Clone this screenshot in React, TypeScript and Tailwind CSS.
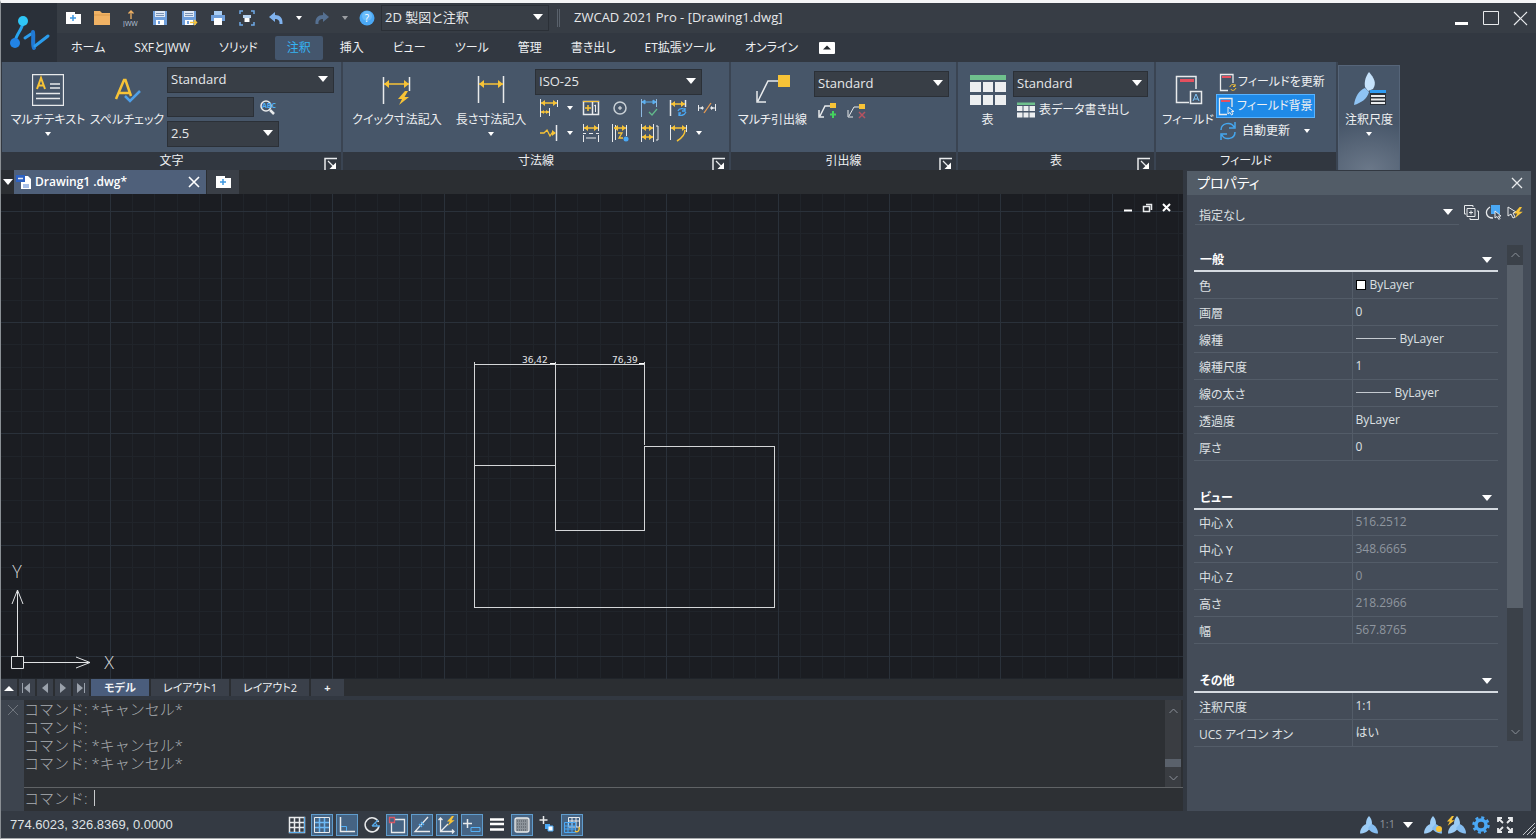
import React, { ReactNode } from 'react'
import { clsx } from 'clsx'

type Kids = { children: ReactNode }

const Caret = ({ className }: { className?: string }) => (
  <svg viewBox="0 0 10 6" className={clsx('h-[6px] w-[10px] fill-white', className)}>
    <path d="M0 0H10L5 6Z" />
  </svg>
)

const SmallCaret = () => (
  <svg viewBox="0 0 6 4" className="h-1 w-1.5 fill-white">
    <path d="M0 0H6L3 4Z" />
  </svg>
)

function Icon({
  size = 20,
  label,
  children,
}: {
  size?: number
  label?: string
  children: ReactNode
}) {
  return (
    <svg
      width={size}
      height={size}
      viewBox={`0 0 ${size} ${size}`}
      fill="none"
      stroke="#e8eaec"
      className="shrink-0"
      aria-label={label}>
      {children}
    </svg>
  )
}

const Scale = ({ mark }: { mark?: ReactNode }) => (
  <Icon size={20}>
    <g fill="#9cccf5" stroke="none">
      <path d="M10 1C13 4 13.500 8 12.500 12H7.500C6.500 8 7 4 10 1Z" />
      <path d="M7.500 9L11 13C9 17 5 18.500 1 18.500C1 14 4 10 7.500 9Z" />
      <path d="M12.500 9C16 10 19 14 19 18.500C15 18.500 11 17 9 13Z" fill="#85bdf0" />
    </g>
    {mark}
  </Icon>
)

const Bolt = ({ x = 0, y = 0, s = 1 }: { x?: number; y?: number; s?: number }) => (
  <path
    transform={`translate(${x} ${y}) scale(${s})`}
    d="M7 0L0 8H4L1 14L11 6H6.500L10 0Z"
    fill="#f7c337"
    stroke="none"
  />
)

// horizontal dimension line with two solid arrow heads
const Arrow = ({ x1, x2, y, h = 3 }: { x1: number; x2: number; y: number; h?: number }) => (
  <g fill="#f7c337" stroke="#f7c337">
    <path d={`M${x1} ${y}H${x2}`} strokeWidth="1.500" />
    <path
      stroke="none"
      d={`M${x1} ${y}l${h + 1} ${-h}v${2 * h}zM${x2} ${y}l${-h - 1} ${-h}v${2 * h}z`}
    />
  </g>
)

function Combo({
  label,
  value,
  className,
}: {
  label: string
  value: string
  className?: string
}) {
  return (
    <div className={clsx('relative', className)}>
      <select
        aria-label={label}
        className="block h-[26px] w-full appearance-none border border-[#2b3037] bg-[#383e46] pl-[3px] text-[13px] text-[#e6e8ea] outline-none">
        <option>{value}</option>
      </select>
      <Caret className="pointer-events-none absolute top-[9px] right-1.5" />
    </div>
  )
}

function BigButton({
  label,
  caret,
  className,
  children,
}: {
  label: string
  caret?: boolean
  className?: string
  children: ReactNode
}) {
  return (
    <button
      className={clsx(
        'flex shrink-0 flex-col items-center text-xs whitespace-nowrap text-[#eef0f2]',
        className
      )}>
      <span className="flex h-9 items-center">{children}</span>
      <span className="leading-6">{label}</span>
      {caret && <SmallCaret />}
    </button>
  )
}

function Panel({
  title,
  className,
  launcher = true,
  children,
}: Kids & { title: string; className?: string; launcher?: boolean }) {
  return (
    <section
      className={clsx('flex shrink-0 flex-col border-r-2 border-[#3a4452]', className)}>
      <div className="flex h-[90px] bg-[#475669]">{children}</div>
      <div className="relative flex h-[18px] items-center justify-center bg-[#313740] text-xs text-[#eef0f2]">
        {title}
        {launcher && (
          <button aria-label={`${title} 設定`} className="absolute right-1 bottom-0">
            <Icon size={13}>
              <path d="M1 13V1.500H13" strokeWidth="1.500" />
              <path d="M4 4L10 10" strokeWidth="1.300" />
              <path d="M12 5.500V12H5.500Z" fill="#fff" stroke="none" />
            </Icon>
          </button>
        )}
      </div>
    </section>
  )
}

const DocPage = () => (
  <Icon size={18}>
    <path d="M2 3H11V5H17V15H2Z" fill="#fff" stroke="none" />
    <path d="M9 6V12M6 9H12" stroke="#3d97e0" strokeWidth="1.500" />
  </Icon>
)

const Floppy = ({ arrow }: { arrow?: boolean }) => (
  <Icon size={18}>
    <path d="M2 2H16V16H2Z" fill="#6f9fdb" stroke="none" />
    <path d="M4 2H14V8H4Z" fill="#dfe8f4" stroke="none" />
    <path d="M5 4.500H13M5 6.500H13" stroke="#7b93b3" />
    <path d="M5 11H13V16H5Z" fill="#fff" stroke="none" />
    <path d="M7 12H9V15H7Z" fill="#6f9fdb" stroke="none" />
    {arrow && <path d="M10 13.500H16M14 11L16.500 13.500L14 16" stroke="#f7c337" strokeWidth="1.500" />}
  </Icon>
)

function QuickAccess() {
  return (
    <div className="flex items-center gap-[11px] pl-[7px]">
      <button aria-label="新規">
        <DocPage />
      </button>
      <button aria-label="開く">
        <Icon size={18}>
          <path d="M1 2H7L9 4H17V16H1Z" fill="#f0b264" stroke="none" />
          <path d="M1 6H17" stroke="#d99a4c" />
        </Icon>
      </button>
      <button aria-label="JWW" className="flex flex-col items-center">
        <svg width="18" height="18" viewBox="0 0 18 18" fill="none">
          <path d="M9 10V2M6.500 4.500L9 2L11.500 4.500" stroke="#f0b264" strokeWidth="1.300" />
          <text x="1" y="17" fontSize="7" fill="#b8c6dc">
            JWW
          </text>
        </svg>
      </button>
      <button aria-label="上書き保存">
        <Floppy />
      </button>
      <button aria-label="名前を付けて保存">
        <Floppy arrow />
      </button>
      <button aria-label="印刷">
        <Icon size={18}>
          <path d="M5 2H13V6H5Z" fill="#a9cdf3" stroke="none" />
          <path d="M2 6H16V12H2Z" fill="#6f9fdb" stroke="none" />
          <path d="M5 9H13V16H5Z" fill="#fff" stroke="none" />
        </Icon>
      </button>
      <button aria-label="印刷プレビュー">
        <Icon size={18}>
          <path
            d="M2 5V2H5M13 2H16V5M16 13V16H13M5 16H2V13"
            stroke="#6fa9e6"
            strokeWidth="1.500"
          />
          <path d="M5 6H13V9H5Z" fill="#b6d2f0" stroke="none" />
          <path d="M6.500 9H11.500V13H6.500Z" fill="#fff" stroke="none" />
        </Icon>
      </button>
      <button aria-label="元に戻す">
        <Icon size={18}>
          <path d="M2 8L8 3V6C13 6 16 9 15.500 15H12.500C13 11.500 11 10 8 10V13Z" fill="#7fb2ee" stroke="none" />
        </Icon>
      </button>
      <button aria-label="元に戻す履歴">
        <SmallCaret />
      </button>
      <button aria-label="やり直し" className="opacity-60">
        <Icon size={18}>
          <path d="M16 8L10 3V6C5 6 2 9 2.500 15H5.500C5 11.500 7 10 10 10V13Z" fill="#6a92c4" stroke="none" />
        </Icon>
      </button>
      <button aria-label="やり直し履歴" className="opacity-50">
        <SmallCaret />
      </button>
      <button aria-label="ヘルプ">
        <svg width="16" height="16" viewBox="0 0 16 16">
          <circle cx="8" cy="8" r="7.500" fill="#4aa8f5" />
          <circle cx="8" cy="6" r="5" fill="#69bbfa" />
          <text x="8" y="12" fontSize="10" textAnchor="middle" fill="#fff">
            ?
          </text>
        </svg>
      </button>
    </div>
  )
}

const menu = [
  'ホーム',
  'SXFとJWW',
  'ソリッド',
  '注釈',
  '挿入',
  'ビュー',
  'ツール',
  '管理',
  '書き出し',
  'ET拡張ツール',
  'オンライン',
]

function Header() {
  return (
    <header className="flex h-[59px] shrink-0 bg-[#323841]">
      <div className="flex w-[56px] shrink-0 items-center justify-center bg-[#2a3039]">
        <svg width="44" height="40" viewBox="0 0 44 40" fill="none" strokeLinecap="round" aria-label="ZWCAD">
          <path d="M16 8C16 17 9 20 8 29" stroke="#28a5ee" strokeWidth="3" />
          <circle cx="16" cy="8" r="5" fill="#2fc6f7" />
          <circle cx="8" cy="30" r="5" fill="#2183e6" />
          <path d="M18 25L24 21" stroke="#2b9cec" strokeWidth="3" />
          <path d="M26 19C27 25 25 30 27 35" stroke="#2179d4" strokeWidth="4" />
          <path d="M28 33L41 23" stroke="#2b9cec" strokeWidth="3" />
        </svg>
      </div>
      <div className="flex min-w-0 flex-1 flex-col">
        <div className="flex h-[30px] items-center bg-[#373d45]">
          <QuickAccess />
          <Combo label="ワークスペース" value="2D 製図と注釈" className="ml-1.5 w-[168px]" />
          <div className="mx-2 h-[18px] w-[3px] border-x border-[#59616b]" />
          <h1 className="ml-1.5 text-[13px] text-[#e6e8ea]">ZWCAD 2021 Pro - [Drawing1.dwg]</h1>
          <div className="ml-auto flex items-center gap-3.5 pr-2">
            <button aria-label="最小化">
              <Icon size={15}>
                <path d="M1 12.500H14" stroke="#fff" strokeWidth="3" />
              </Icon>
            </button>
            <button aria-label="最大化">
              <Icon size={16}>
                <path d="M0.500 1.500H15.500V14.500H0.500Z" />
              </Icon>
            </button>
            <button aria-label="閉じる">
              <Icon size={15}>
                <path d="M1 1L14 14M14 1L1 14" strokeWidth="1.200" />
              </Icon>
            </button>
          </div>
        </div>
        <nav className="flex h-[29px] items-center gap-[5px] pl-0.5">
          {menu.map((item) => (
            <button
              key={item}
              className={clsx(
                'h-6 rounded-xs px-3 text-xs whitespace-nowrap',
                item === '注釈' ? 'bg-[#44566d] text-[#35b3f2]' : 'text-[#eef0f2]'
              )}>
              {item}
            </button>
          ))}
          <button aria-label="リボンを最小化" className="ml-1">
            <svg width="16" height="12" viewBox="0 0 16 12">
              <rect width="16" height="12" rx="1" fill="#fff" />
              <path d="M4 7.500L8 3.500L12 7.500Z" fill="#23272d" />
            </svg>
          </button>
        </nav>
      </div>
    </header>
  )
}

const dimTools = [
  [
    <Icon key="a" label="ベースライン寸法">
      <path d="M1.500 1V19M18.500 2V9M10.500 10V18" />
      <Arrow x1={2} x2={18} y={5} />
      <Arrow x1={2} x2={10} y={14} h={2} />
    </Icon>,
    <SmallCaret key="b" />,
    <Icon key="c" label="幾何公差">
      <path d="M2.500 3.500H17.500V16.500H2.500ZM11.500 3V17" strokeWidth="1.500" />
      <path d="M2 3.500H18" stroke="#f7c337" />
      <path d="M4 10H10M7 7V13" stroke="#f7c337" strokeWidth="1.500" />
      <path d="M13 8L14.500 7V14" />
    </Icon>,
    <Icon key="d" label="中心マーク">
      <circle cx="10" cy="10" r="6" stroke="#c9d0d6" strokeWidth="1.500" />
      <path d="M10 8V12M8 10H12" />
    </Icon>,
    <Icon key="e" label="検査">
      <path d="M2.500 1V19M17.500 1V9" stroke="#8db9e0" />
      <path d="M3 4H17M3 4L6 2V6ZM17 4L14 2V6Z" stroke="#5cb0f0" fill="#5cb0f0" />
      <path d="M10 14L13 17L18 11" stroke="#62b98b" strokeWidth="1.300" />
    </Icon>,
    <Icon key="f" label="寸法更新">
      <path d="M2.500 2V18M17.500 2V9" strokeWidth="1.500" />
      <Arrow x1={3} x2={17} y={6} />
      <path d="M10 13C11 10 16 10 17 12M18 14C16 18 12 18 11 16M17 10V13H14M11 18V15H13" stroke="#4aa8f5" strokeWidth="1.300" />
    </Icon>,
    <Icon key="g" label="寸法線分断">
      <path d="M1.500 7V13M1 10H7M13 10H19M18.500 6V13" />
      <path d="M3 10L6 8V12ZM17 10L14 8V12Z" fill="#e8eaec" stroke="none" />
      <path d="M7 15L14 5" stroke="#e79b52" strokeWidth="1.300" />
    </Icon>,
  ],
  [
    <Icon key="a" label="折り曲げ寸法">
      <path d="M17.500 2V18" strokeWidth="1.500" />
      <path d="M1 10H5L8 7L11 13L13 10H16" stroke="#f7c337" strokeWidth="1.300" />
      <path d="M17 10L13 7V13Z" fill="#f7c337" stroke="none" />
    </Icon>,
    <SmallCaret key="b" />,
    <Icon key="c" label="寸法間隔">
      <path d="M2.500 1V8M17.500 1V8M2.500 12V19M17.500 12V19M2 10.500H5M8 10.500H12M15 10.500H18M5 15H15" />
      <Arrow x1={3} x2={17} y={5} />
    </Icon>,
    <Icon key="d" label="寸法編集">
      <path d="M2.500 1V19M5.500 2V17M16.500 2V13" />
      <Arrow x1={4} x2={16} y={5} />
      <path d="M8 10H12L9 15H13" stroke="#f7c337" strokeWidth="1.300" />
      <circle cx="16" cy="16" r="2.500" fill="#4aa8f5" stroke="none" />
    </Icon>,
    <Icon key="e" label="寸法位置合わせ">
      <path d="M2.500 1V19M14.500 1V19M17 3H19V17H17" />
      <Arrow x1={3} x2={14} y={5} />
      <Arrow x1={3} x2={14} y={14} />
    </Icon>,
    <Icon key="f" label="寸法傾斜">
      <path d="M2.500 2V17M18.500 2V9" />
      <Arrow x1={3} x2={18} y={5} />
      <path d="M17 7C17 12 14 15 9 18" stroke="#f7c337" strokeWidth="1.500" />
    </Icon>,
    <SmallCaret key="g" />,
  ],
]

const FieldPage = ({ children }: { children?: ReactNode }) => (
  <Icon size={20}>
    <path d="M15 11V2.500H2.500V18.500H10" strokeWidth="1.300" />
    <path d="M4 5H13" stroke="#e5505f" strokeWidth="2" />
    {children}
  </Icon>
)

const TableGlyph = ({ size }: { size: number }) => (
  <svg width={size} height={size} viewBox="0 0 36 36" aria-hidden>
    <path d="M0 3H36V8H0Z" fill="#6fc08d" />
    <path d="M0 10H11V20H0ZM13 10H23V20H13ZM25 10H36V20H25ZM0 23H11V33H0ZM13 23H23V33H13ZM25 23H36V33H25Z" fill="#eceef0" />
  </svg>
)

function Ribbon() {
  return (
    <div className="flex h-[108px] shrink-0 bg-[#323841] pl-px">
      <Panel title="文字" className="w-[341px]">
        <BigButton label="マルチテキスト" caret className="w-[92px] pt-2.5">
          <Icon size={32}>
            <path d="M0.500 0.500H31.500V31.500H0.500Z" strokeWidth="1.300" />
            <path d="M5 15L9 4L13 15M6.500 11.500H11.500" stroke="#f7c337" strokeWidth="2" />
            <path d="M18 10H28M18 14H28M4 19.500H28M4 24.500H28" strokeWidth="1.500" />
          </Icon>
        </BigButton>
        <BigButton label="スペルチェック" className="w-[66px] pt-2.5">
          <Icon size={28}>
            <path d="M3 23L11 4H12.500L18 20M6 17H16" stroke="#f7c337" strokeWidth="2.500" />
            <path d="M12 20L17 25L27 15" stroke="#4f9fe8" strokeWidth="2.500" />
          </Icon>
        </BigButton>
        <div className="ml-[7px] flex flex-col gap-1 pt-[5px]">
          <Combo label="文字スタイル" value="Standard" className="w-[167px]" />
          <div className="flex items-center gap-1">
            <input
              aria-label="文字を検索"
              className="h-5 w-[87px] border border-[#2b3037] bg-[#383e46] px-1 text-[13px] text-white outline-none"
            />
            <button aria-label="検索">
              <svg width="20" height="18" viewBox="0 0 20 18" fill="none">
                <circle cx="8" cy="8" r="5" stroke="#e8eaec" strokeWidth="1.500" />
                <path d="M12 12L16 16" stroke="#e8eaec" strokeWidth="2.500" />
                <text x="4" y="10" fontSize="7" fontWeight="700" fill="#4fb0f5">
                  ABC
                </text>
              </svg>
            </button>
          </div>
          <Combo label="文字の高さ" value="2.5" className="w-[112px]" />
        </div>
      </Panel>

      <Panel title="寸法線" className="w-[388px]">
        <BigButton label="クイック寸法記入" className="w-[108px] pt-2.5">
          <Icon size={32}>
            <path d="M2.500 3V30M28.500 3V17" strokeWidth="1.500" />
            <Arrow x1={3} x2={28} y={10} h={4} />
            <Bolt x={17} y={17} />
          </Icon>
        </BigButton>
        <BigButton label="長さ寸法記入" caret className="w-[80px] pt-2.5">
          <Icon size={32}>
            <path d="M3.500 2V29M28.500 2V29" strokeWidth="1.500" />
            <Arrow x1={4} x2={28} y={10} h={4} />
          </Icon>
        </BigButton>
        <div className="ml-1 flex flex-col pt-[7px]">
          <Combo label="寸法スタイル" value="ISO-25" className="w-[167px]" />
          {dimTools.map((row, i) => (
            <div key={i} className="flex h-[25px] items-center gap-[9px] pl-1">
              {row.map((tool, j) => (
                <button
                  key={j}
                  aria-label="寸法ツール"
                  className={clsx(
                    'flex h-5 items-center justify-center',
                    j === 1 ? '-mx-1 w-3' : j === 6 && i === 1 ? '-ml-1 w-3' : 'w-5'
                  )}>
                  {tool}
                </button>
              ))}
            </div>
          ))}
        </div>
      </Panel>

      <Panel title="引出線" className="w-[227px]">
        <BigButton label="マルチ引出線" className="w-[83px] pt-2.5">
          <Icon size={34}>
            <path d="M23 8H12L2 28M1 18V29H10" strokeWidth="1.500" />
            <path d="M22 2H34V14H22Z" fill="#f7c337" stroke="none" />
          </Icon>
        </BigButton>
        <div className="flex flex-col gap-1 pt-[9px]">
          <Combo label="引出線スタイル" value="Standard" className="w-[135px]" />
          <div className="flex gap-[9px] pl-1">
            <button aria-label="引出線を追加">
              <Icon>
                <path d="M12 5H7L2 15M1 9V16H6" strokeWidth="1.500" />
                <path d="M12 2H18V7H12Z" fill="#f7c337" stroke="none" />
                <path d="M15 10V17M12 13.500H18" stroke="#44d35e" strokeWidth="2" />
              </Icon>
            </button>
            <button aria-label="引出線を除去">
              <Icon>
                <path d="M12 6H7L2 15M1 9V16H6" />
                <path d="M12 3H18V8H12Z" fill="#f7c337" stroke="none" />
                <path d="M12 11L18 17M18 11L12 17" stroke="#b65361" strokeWidth="1.500" />
              </Icon>
            </button>
          </div>
        </div>
      </Panel>

      <Panel title="表" className="w-[198px]">
        <BigButton label="表" className="w-[55px] pt-2.5 pl-1">
          <TableGlyph size={36} />
        </BigButton>
        <div className="flex flex-col gap-1 pt-[9px]">
          <Combo label="表スタイル" value="Standard" className="w-[135px]" />
          <button className="flex items-center gap-1 pl-1 text-xs whitespace-nowrap text-[#eef0f2]">
            <TableGlyph size={18} />
            表データ書き出し
          </button>
        </div>
      </Panel>

      <Panel title="フィールド" launcher={false} className="w-[182px]">
        <BigButton label="フィールド" className="w-[60px] pt-2.5 pl-1">
          <Icon size={32}>
            <path d="M24 15V2.500H4.500V28.500H17" strokeWidth="1.500" />
            <path d="M8 6.500H22" stroke="#e5505f" strokeWidth="3" />
            <path d="M18.500 17.500H29.500V29.500H18.500Z" strokeWidth="1.500" />
            <path d="M21 27L24 20L27 27M22 25H26" stroke="#7fc4f8" />
          </Icon>
        </BigButton>
        <div className="flex flex-col items-start pt-2 text-xs whitespace-nowrap text-[#eef0f2]">
          <button className="flex h-6 items-center pl-0.5">
            <FieldPage>
              <path d="M12 15C12 12 17 12 17 14M18 16C17 19 13 19 13 17M17 12V14.500H15" stroke="#f7c337" />
            </FieldPage>
            フィールドを更新
          </button>
          <button
            aria-pressed
            className="flex h-[24px] items-center border border-[#58b3ff] bg-[#1f8ae8] pr-px">
            <FieldPage>
              <path d="M11 11V18L13 16.500L14.500 19L16 18L14.500 15.500H17Z" fill="#1f8ae8" />
            </FieldPage>
            フィールド背景
          </button>
          <button className="flex h-[26px] items-center gap-1 pl-0.5">
            <Icon>
              <path d="M3 9C3 2 13 0 16 6M17 11C17 18 7 20 4 14M17 1V7H11M3 19V13H9" stroke="#45a6ee" strokeWidth="1.500" />
            </Icon>
            自動更新
            <span className="ml-2.5">
              <SmallCaret />
            </span>
          </button>
        </div>
      </Panel>

      <div className="mt-[3px] w-[62px] shrink-0 border border-b-0 border-[#566579] bg-[radial-gradient(70px_50px_at_50%_100%,#6b7889,#475669)]">
        <BigButton label="注釈尺度" caret className="w-full pt-1.5">
          <Icon size={36}>
            <path d="M18 0C23 6 26 11 22 17L17 19L14 15C13 9 15 4 18 0Z" fill="#c6e2fb" stroke="none" />
            <path d="M14 16L18 20C16 27 10 31 3 33C4 25 8 18 14 16Z" fill="#8fc3f3" stroke="none" />
            <path d="M19 18H35V33H19Z" fill="#2b3037" stroke="none" />
            <path d="M19 19.500H35" stroke="#2e9bf2" strokeWidth="3" />
            <path d="M20 24H34M20 27.500H34M20 31H34" strokeWidth="2" />
          </Icon>
        </BigButton>
      </div>
    </div>
  )
}

function FileTabs() {
  return (
    <div className="flex h-6 shrink-0 items-stretch bg-[#2b2e32]">
      <button aria-label="図面一覧" className="flex w-[13px] items-center justify-center">
        <Caret className="w-2" />
      </button>
      <div className="flex w-[192px] items-center bg-[#4f607a] text-[12px] font-semibold text-white">
        <Icon size={20}>
          <path d="M7 4H14L17 7V17H7Z" fill="#fff" stroke="none" />
          <path d="M9 13H15M9 15H15" stroke="#4f7fd0" />
          <path d="M2 3H11V10H2Z" fill="#2d62c4" stroke="none" />
          <path d="M4 6.500H9" strokeWidth="1.500" />
        </Icon>
        <span className="ml-px">Drawing1 .dwg*</span>
        <button aria-label="タブを閉じる" className="mr-1.5 ml-auto">
          <Icon size={12}>
            <path d="M1 1L11 11M11 1L1 11" stroke="#fff" strokeWidth="1.600" />
          </Icon>
        </button>
      </div>
      <button
        aria-label="新しい図面"
        className="ml-px flex w-8 items-center justify-center bg-[#3a3f47]">
        <DocPage />
      </button>
    </div>
  )
}

const CELL = 22.26
const steps = Array.from({ length: 180 }, (_, i) => i)

function Drawing() {
  return (
    <div className="relative min-h-0 flex-1 overflow-hidden bg-[#1b1d22]">
      <svg className="absolute inset-0 h-full w-full" fill="none" shapeRendering="crispEdges">
        {[false, true].map((major) =>
          steps
            .filter((i) => (i % 5 === 0) === major)
            .map((i) => {
              const x = Math.round(i * CELL - 2.5) + 0.5
              const y = Math.round(i * CELL - 94.5) + 0.5
              return (
                <path
                  key={i}
                  d={`M${x} 0V3000M0 ${y}H4000`}
                  stroke={major ? '#2a313a' : '#20242a'}
                />
              )
            })
        )}
        <path
          d="M473.500 271.500H554.500V336.500H643.500V252.500H773.500V413.500H473.500ZM473.500 271V168M554.500 271V168M643.500 251V168M473 170.500H644"
          stroke="#d4d6d8"
        />
        <path d="M549 169.500H554M638 169.500H643" stroke="#fff" />
        <g fill="#e4e6e8" fontSize="9" className="[font-family:'DejaVu_Sans',sans-serif]">
          <text x="521" y="169">36,42</text>
          <text x="611" y="169">76,39</text>
        </g>
        <g stroke="#e0e2e4" shapeRendering="geometricPrecision">
          <path d="M10.500 462.500H22.500V474.500H10.500ZM16.500 462V396M11 410L16.500 396L22 410M23 468.500H89M75 463L89 468.500L75 474" />
        </g>
        <g fill="#d4d6d8" fontSize="18" fontWeight="300" textAnchor="middle">
          <text x="16" y="384">Y</text>
          <text x="108" y="475">X</text>
        </g>
      </svg>
      <div className="absolute top-[7px] right-2.5 flex gap-1.5">
        <button aria-label="図面を最小化">
          <Icon size={13}>
            <path d="M2 9.500H10" stroke="#fff" strokeWidth="2" />
          </Icon>
        </button>
        <button aria-label="元のサイズに戻す">
          <Icon size={13}>
            <path d="M2.500 5.500H8.500V10.500H2.500ZM5 3.500H10.500V9" strokeWidth="1.500" />
          </Icon>
        </button>
        <button aria-label="図面を閉じる">
          <Icon size={13}>
            <path d="M3 3L10 10M10 3L3 10" stroke="#fff" strokeWidth="2" />
          </Icon>
        </button>
      </div>
    </div>
  )
}

const navArrows = [
  { label: 'レイアウト一覧', d: 'M0 8H10L5 3Z', bright: true },
  { label: '最初', d: 'M0 0H1V10H0ZM8 0V10L2 5Z' },
  { label: '前へ', d: 'M8 0V10L2 5Z' },
  { label: '次へ', d: 'M2 0V10L8 5Z' },
  { label: '最後', d: 'M1 0V10L7 5ZM8 0H9V10H8Z' },
]

function LayoutTabs() {
  return (
    <div className="flex h-[17px] shrink-0 gap-0.5 bg-[#2b2e32] text-[11px] text-[#eef0f2]">
      {navArrows.map(({ label, d, bright }) => (
        <button
          key={label}
          aria-label={label}
          className="flex w-4 items-center justify-center bg-[#3a404a]">
          <svg width="10" height="10" viewBox="0 0 10 10" fill={bright ? '#fff' : '#9aa1ab'}>
            <path d={d} />
          </svg>
        </button>
      ))}
      <button className="w-[58px] bg-[#4a5d7c] leading-4 font-bold">モデル</button>
      <button className="w-[78px] bg-[#3a404a] leading-4">レイアウト1</button>
      <button className="w-[78px] bg-[#3a404a] leading-4">レイアウト2</button>
      <button aria-label="レイアウトを追加" className="w-[33px] bg-[#3a404a] leading-4 font-bold">
        +
      </button>
    </div>
  )
}

const Chevron = ({ up }: { up?: boolean }) => (
  <svg width="9" height="6" viewBox="0 0 9 6" fill="none" stroke="#8b9199">
    <path d={up ? 'M0.500 5L4.500 1L8.500 5' : 'M0.500 1L4.500 5L8.500 1'} />
  </svg>
)

const log = ['コマンド: *キャンセル*', 'コマンド:', 'コマンド: *キャンセル*', 'コマンド: *キャンセル*']

function CommandLine() {
  return (
    <div className="mt-1 flex h-[111px] shrink-0 bg-[#2d3034] text-[15px] font-light text-[#a9adb1] [font-feature-settings:normal]">
      <div className="flex w-[23px] justify-center bg-[#3d444e] pt-1">
        <button aria-label="コマンドラインを閉じる" className="h-3">
          <Icon size={12}>
            <path d="M1 1L11 11M11 1L1 11" stroke="#6f757d" />
          </Icon>
        </button>
      </div>
      <div className="flex flex-1 flex-col">
        <div className="flex h-[88px] justify-between border-b border-[#606366]">
          <div>
            {log.map((line, i) => (
              <p key={i} className="leading-[18px]">
                {line}
              </p>
            ))}
          </div>
          <div className="mr-0.5 flex w-4 flex-col items-center justify-between bg-[#3a3d42] pt-2 pb-1.5">
            <Chevron up />
            <div className="mt-auto mb-2 h-2 w-full bg-[#5a616b]" />
            <Chevron />
          </div>
        </div>
        <div className="flex h-[20px] items-center">
          <label htmlFor="command">コマンド:</label>
          <span className="ml-1.5 h-4 w-px bg-[#c8cacc]" />
          <input id="command" className="min-w-0 flex-1 bg-transparent outline-none" />
        </div>
      </div>
    </div>
  )
}

type Prop = { name: string; value: string; line?: number; swatch?: boolean; dim?: boolean }

const sections: { title: string; rows: Prop[] }[] = [
  {
    title: '一般',
    rows: [
      { name: '色', value: 'ByLayer', swatch: true },
      { name: '画層', value: '0' },
      { name: '線種', value: 'ByLayer', line: 40 },
      { name: '線種尺度', value: '1' },
      { name: '線の太さ', value: 'ByLayer', line: 35 },
      { name: '透過度', value: 'ByLayer' },
      { name: '厚さ', value: '0' },
    ],
  },
  {
    title: 'ビュー',
    rows: [
      { name: '中心 X', value: '516.2512', dim: true },
      { name: '中心 Y', value: '348.6665', dim: true },
      { name: '中心 Z', value: '0', dim: true },
      { name: '高さ', value: '218.2966', dim: true },
      { name: '幅', value: '567.8765', dim: true },
    ],
  },
  {
    title: 'その他',
    rows: [
      { name: '注釈尺度', value: '1:1' },
      { name: 'UCS アイコン オン', value: 'はい' },
    ],
  },
]

function Properties() {
  return (
    <aside className="mt-px ml-1 flex w-[344px] shrink-0 flex-col bg-[#444c58] text-xs text-[#dde0e3]">
      <div className="flex h-6 items-center justify-between bg-[#525c67] pr-2 pl-2.5">
        <h2 className="text-sm text-white">プロパティ</h2>
        <button aria-label="プロパティを閉じる">
          <Icon size={12}>
            <path d="M1 1L11 11M11 1L1 11" strokeWidth="1.300" />
          </Icon>
        </button>
      </div>
      <div className="mt-1 flex h-[26px] items-center gap-[3px] pr-1.5 pl-2">
        <div className="relative h-full flex-1 border-b border-[#535c68]">
          <select
            aria-label="選択オブジェクト"
            className="h-full w-full appearance-none bg-transparent pt-2 pl-1 outline-none">
            <option>指定なし</option>
          </select>
          <Caret className="pointer-events-none absolute top-2.5 right-1.5" />
        </div>
        <button aria-label="PICKADD 切り替え">
          <Icon size={19}>
            <path d="M4 11H2.500V2.500H11V4M5 13.500V5.500H13V13.500ZM15 8H16.500V16.500H8V15M9 7.500V11.500M7 9.500H11" />
          </Icon>
        </button>
        <button aria-label="オブジェクト選択">
          <Icon size={19}>
            <path d="M6 4C0 8 2 15 9 15" strokeWidth="1.300" />
            <path d="M7 2H16V11H7Z" fill="#4aa8f5" stroke="none" />
            <path d="M11 8V15L13 13.500L15 16.500L16 15.500L14.500 13H17Z" fill="#444c58" />
          </Icon>
        </button>
        <button aria-label="クイック選択">
          <Icon size={19}>
            <path d="M2 4V13L5 11L7 15L9 14L7 10L10 9Z" />
            <Bolt x={8} y={4} s={0.8} />
          </Icon>
        </button>
      </div>
      <div className="mt-5 flex h-[496px] pr-2 pl-[7px]">
        <div className="min-w-0 flex-1 pr-[9px]">
          {sections.map(({ title, rows }, i) => (
            <table key={title} className="w-full table-fixed border-collapse">
              <colgroup>
                <col className="w-[158px]" />
                <col />
              </colgroup>
              <thead>
                <tr className={i === 0 ? 'h-[26px]' : 'h-12'}>
                  <th
                    colSpan={2}
                    className="border-b-2 border-[#d5dae0] px-1.5 text-left align-bottom font-semibold text-white">
                    <span className="flex items-center justify-between leading-5">
                      {title}
                      <Caret className="w-3" />
                    </span>
                  </th>
                </tr>
              </thead>
              <tbody>
                {rows.map(({ name, value, line, swatch, dim }) => (
                  <tr key={name} className="h-[27px] border-b border-[#535c68]">
                    <td className="border-r border-[#535c68] pt-1 pb-0 pl-[5px]">{name}</td>
                    <td className={clsx('py-0 pl-[3px]', dim && 'text-[#8f969f]')}>
                      <span className="flex items-center gap-1">
                        {swatch && <span className="size-2.5 border border-black bg-white" />}
                        {line && (
                          <span className="h-px bg-[#c5cad0]" style={{ width: line }} />
                        )}
                        {value}
                      </span>
                    </td>
                  </tr>
                ))}
              </tbody>
            </table>
          ))}
        </div>
        <div className="flex w-4 flex-col items-center bg-[#3b4149]">
          <div className="flex h-5 items-center">
            <Chevron up />
          </div>
          <div className="w-full flex-1 bg-[#59616b]" />
          <div className="flex h-[133px] items-end pb-1.5">
            <Chevron />
          </div>
        </div>
      </div>
    </aside>
  )
}

const toggles: { label: string; on?: boolean; art: ReactNode }[] = [
  {
    label: 'スナップ',
    art: (
      <>
        <path d="M2.500 2.500H17.500V17.500H2.500ZM7.500 2V18M12.500 2V18M2 7.500H18M2 12.500H18" strokeWidth="1.500" />
        <path d="M17.500 2V17.500H2" stroke="#5cb0f0" />
      </>
    ),
  },
  {
    label: 'グリッド',
    on: true,
    art: (
      <>
        <path d="M7.500 3V17M12.500 3V17M3 7.500H17M3 12.500H17" stroke="#6db9f5" strokeWidth="1.500" />
        <path d="M2.500 2.500H17.500V17.500H2.500Z" />
      </>
    ),
  },
  {
    label: '直交',
    on: true,
    art: (
      <>
        <path d="M3.500 2V16.500H18" strokeWidth="1.500" />
        <path d="M4 11.500H9.500V16" stroke="#55b0f5" />
      </>
    ),
  },
  {
    label: '極トラッキング',
    art: (
      <>
        <path d="M16.500 7A7 7 0 1 0 17 11" strokeWidth="1.500" />
        <path d="M10 11L16 5M10 11H18M13 8C15 9 15 10 15 11" stroke="#55a9ea" strokeWidth="1.300" />
      </>
    ),
  },
  {
    label: 'オブジェクトスナップ',
    on: true,
    art: (
      <>
        <path d="M8 4.500H17.500V17.500H4.500V8" strokeWidth="1.300" />
        <path d="M2.500 2.500H7.500V7.500H2.500Z" stroke="#d65764" strokeWidth="1.300" />
      </>
    ),
  },
  {
    label: 'オブジェクトスナップトラッキング',
    on: true,
    art: (
      <>
        <path d="M16 2L3 16.500H18" strokeWidth="1.300" />
        <path d="M7 9L10 12M9 7L12 10" stroke="#55b0f5" strokeWidth="1.300" />
      </>
    ),
  },
  {
    label: 'ダイナミック UCS',
    on: true,
    art: (
      <>
        <path d="M3.500 3V16.500H17M1.500 5L3.500 3L5.500 5M15 14.500L17 16.500L15 18.500M4 16L11 9" strokeWidth="1.300" />
        <Bolt x={10} y={1} s={0.7} />
      </>
    ),
  },
  {
    label: 'ダイナミック入力',
    on: true,
    art: (
      <>
        <path d="M5.500 4V13M1 8.500H10" strokeWidth="1.500" />
        <path d="M9 12.500H18V16.500H9Z" stroke="#55b0f5" />
      </>
    ),
  },
  {
    label: '線の太さを表示',
    art: <path d="M3 4.500H17M3 9H17M3 14.500H17" stroke="#fff" strokeWidth="2.500" />,
  },
  {
    label: '透過性',
    on: true,
    art: (
      <>
        <rect x="3" y="3" width="14" height="14" rx="2" fill="#8d949b" strokeWidth="1.300" />
        <path d="M5 6H15M5 9H15M5 12H15M5 15H15" stroke="#4d545c" strokeDasharray="1 1" />
      </>
    ),
  },
  {
    label: '選択の循環',
    art: (
      <>
        <path d="M6.500 1V9M2.500 5H10.500" strokeWidth="1.500" />
        <path d="M8 9H13V14H8Z" fill="#4aa8f5" stroke="none" />
        <path d="M11 11H16V16H11Z" fill="#fff" stroke="#4aa8f5" />
      </>
    ),
  },
  {
    label: 'クイックプロパティ',
    on: true,
    art: (
      <>
        <path d="M6.500 2.500H17.500V12H6.500ZM10 2V12M14 2V12M6 6H18" />
        <path d="M2.500 7.500H13.500V17.500H2.500ZM6 8V17M10 8V17M3 11H13M3 14H13" stroke="#4aa8f5" />
        <path d="M13 16C16 18 18 15 17 12" stroke="#f7c337" strokeWidth="1.500" />
      </>
    ),
  },
]

function StatusBar() {
  return (
    <footer className="flex h-[27px] shrink-0 items-center bg-[#343a43] text-[#dfe2e5]">
      <span className="w-[285px] pl-[9px] font-['Liberation_Sans',sans-serif] text-[13px]">
        774.6023, 326.8369, 0.0000
      </span>
      <div className="flex gap-[3px]">
        {toggles.map(({ label, on, art }) => (
          <button
            key={label}
            aria-label={label}
            aria-pressed={!!on}
            className={clsx(
              'flex size-[22px] items-center justify-center border',
              on ? 'border-[#5f9ccd] bg-[#456383]' : 'border-transparent'
            )}>
            <Icon>{art}</Icon>
          </button>
        ))}
      </div>
      <div className="ml-auto flex items-center pr-px">
        <button className="flex items-center gap-px text-[11px] text-[#8d949c]">
          <Scale />
          1:1
        </button>
        <button aria-label="注釈尺度リスト" className="mr-2.5 ml-2">
          <Caret />
        </button>
        <div className="flex items-center gap-1">
          <button aria-label="注釈の表示">
            <Scale mark={<circle cx="16" cy="14" r="3" fill="#f7c337" stroke="none" />} />
          </button>
          <button aria-label="注釈尺度の自動追加">
            <Scale mark={<Bolt x={0} y={1} s={0.7} />} />
          </button>
          <button aria-label="設定">
            <Icon>
              <circle cx="10" cy="10" r="5" stroke="#4aa8f5" strokeWidth="3.500" />
              <circle cx="10" cy="10" r="7.500" stroke="#4aa8f5" strokeWidth="2.500" strokeDasharray="3 2.890" />
            </Icon>
          </button>
          <button aria-label="全画面表示">
            <Icon>
              <path
                d="M3 7V3H7M13 3H17V7M17 13V17H13M7 17H3V13M3 3L8 8M17 3L12 8M17 17L12 12M3 17L8 12"
                strokeWidth="1.800"
              />
            </Icon>
          </button>
        </div>
        <svg width="12" height="12" viewBox="0 0 12 12" stroke="#c2c6cb" className="ml-2 self-end" aria-hidden>
          <path d="M0 12L12 0M4 12L12 4M8 12L12 8" />
        </svg>
      </div>
    </footer>
  )
}

export default function App() {
  return (
    <div className="flex h-screen min-h-[720px] flex-col overflow-hidden border-t-[3px] border-b border-l border-t-[#f4f5f6] border-b-[#a8abae] border-l-[#8a8f94] bg-[#323841] [font-family:'Open_Sans','Noto_Sans_CJK_JP',sans-serif] [font-feature-settings:'palt']">
      <Header />
      <Ribbon />
      <div className="flex min-h-0 flex-1">
        <main className="flex min-w-0 flex-1 flex-col">
          <FileTabs />
          <Drawing />
          <LayoutTabs />
          <CommandLine />
        </main>
        <Properties />
        <div className="w-[5px] shrink-0" />
      </div>
      <StatusBar />
    </div>
  )
}
